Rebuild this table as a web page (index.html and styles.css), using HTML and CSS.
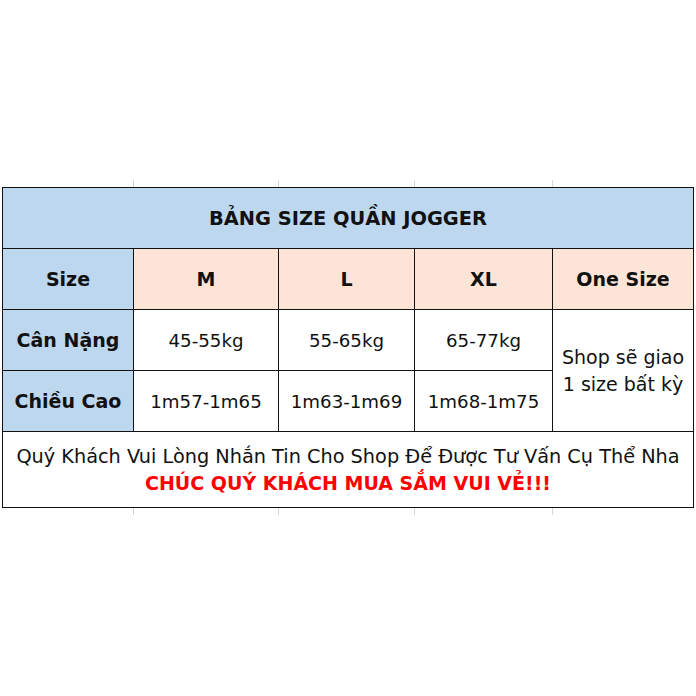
FILE: index.html
```html
<!DOCTYPE html>
<html lang="vi">
<head>
<meta charset="utf-8">
<title>Bảng size quần jogger</title>
<link rel="stylesheet" href="styles.css">
</head>
<body>
<div class="sheet">
  <div class="grid-ticks">
    <span class="g g1"></span><span class="g g2"></span><span class="g g3"></span><span class="g g4"></span>
  </div>
  <table class="size-table">
    <colgroup>
      <col class="c1"><col class="c2"><col class="c3"><col class="c4"><col class="c5">
    </colgroup>
    <tr class="row">
      <td colspan="5" class="title blue">BẢNG SIZE QUẦN JOGGER</td>
    </tr>
    <tr class="row">
      <td class="head blue">Size</td>
      <td class="head peach">M</td>
      <td class="head peach">L</td>
      <td class="head peach">XL</td>
      <td class="head peach">One Size</td>
    </tr>
    <tr class="row">
      <td class="head blue">Cân Nặng</td>
      <td class="val">45-55kg</td>
      <td class="val">55-65kg</td>
      <td class="val">65-77kg</td>
      <td class="val note" rowspan="2">Shop sẽ giao<br>1 size bất kỳ</td>
    </tr>
    <tr class="row">
      <td class="head blue">Chiều Cao</td>
      <td class="val">1m57-1m65</td>
      <td class="val">1m63-1m69</td>
      <td class="val">1m68-1m75</td>
    </tr>
    <tr class="foot-row">
      <td colspan="5" class="foot">
        <div class="line1">Quý Khách Vui Lòng Nhắn Tin Cho Shop Để Được Tư Vấn Cụ Thể Nha</div>
        <div class="line2">CHÚC QUÝ KHÁCH MUA SẮM VUI VẺ!!!</div>
      </td>
    </tr>
  </table>
  <div class="grid-ticks">
    <span class="g g1"></span><span class="g g2"></span><span class="g g3"></span><span class="g g4"></span>
  </div>
</div>
</body>
</html>
```

FILE: styles.css
```css
html, body {
  margin: 0;
  padding: 0;
  background: #ffffff;
}
body {
  font-family: "DejaVu Sans", "Liberation Sans", sans-serif;
  color: #111111;
}
.sheet {
  width: 696px;
  height: 696px;
  padding-top: 180px;
  padding-left: 2px;
  box-sizing: border-box;
}
.grid-ticks {
  height: 7px;
  position: relative;
}
.g {
  position: absolute;
  top: 0;
  width: 1px;
  height: 7px;
  background: #d8d8d8;
}
.g1 { left: 131px; }
.g2 { left: 276px; }
.g3 { left: 412px; }
.g4 { left: 550px; }
.size-table {
  border-collapse: collapse;
  table-layout: fixed;
  width: 691px;
}
.c1 { width: 131px; }
.c2 { width: 145px; }
.c3 { width: 136px; }
.c4 { width: 138px; }
.c5 { width: 141px; }
.size-table td {
  border: 1.5px solid #111111;
  text-align: center;
  vertical-align: middle;
  padding: 0;
}
.row { height: 61px; }
.foot-row { height: 76px; }
.blue { background: #bdd7ee; }
.peach { background: #fce4d6; }
.title {
  font-weight: bold;
  font-size: 19.4px;
}
.head {
  font-weight: bold;
  font-size: 19px;
}
.val {
  font-size: 18.2px;
}
.note {
  font-size: 19px;
  line-height: 27px;
}
.foot {
  font-size: 19.3px;
  line-height: 27px;
}
.line2 {
  color: #ff0000;
  font-weight: bold;
  font-size: 19px;
}
```
